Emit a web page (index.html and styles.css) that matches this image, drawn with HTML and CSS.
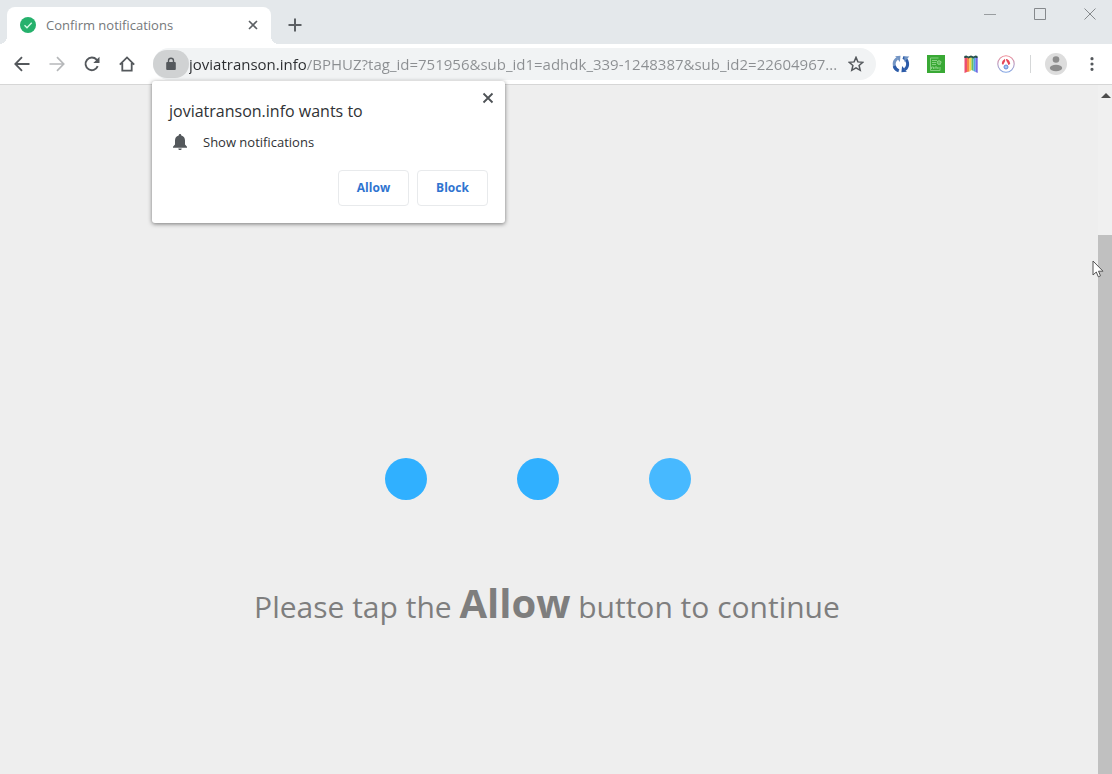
FILE: index.html
```html
<!DOCTYPE html>
<html lang="en">
<head>
<meta charset="utf-8">
<title>Confirm notifications</title>
<link rel="stylesheet" href="styles.css">
</head>
<body>
<div class="browser">
  <header class="tabstrip">
    <div class="tab">
      <svg class="icon16" viewBox="0 0 16 16"><circle cx="8" cy="8" r="8" fill="#25b16c"/><path d="M4.5 8.2l2.5 2.5 4.7-4.9" fill="none" stroke="#d9fbe8" stroke-width="1.3"/></svg>
      <span class="tab-title">Confirm notifications</span>
      <button class="plain" aria-label="Close tab"><svg class="icon10" viewBox="0 0 10 10"><path d="M1 1l8 8M9 1l-8 8" stroke="#5c6064" stroke-width="1.6"/></svg></button>
    </div>
    <button class="plain new-tab" aria-label="New tab"><svg class="icon14" viewBox="0 0 14 14"><path d="M7 .5v13M.5 7h13" stroke="#5c6064" stroke-width="2"/></svg></button>
    <div class="window-controls">
      <button class="plain" aria-label="Minimize"><svg class="icon12" viewBox="0 0 12 12"><path d="M0 6.5h12" stroke="#999da0"/></svg></button>
      <button class="plain" aria-label="Maximize"><svg class="icon12" viewBox="0 0 12 12"><path d="M.5.5h11v11H.5z" fill="none" stroke="#85898c"/></svg></button>
      <button class="plain" aria-label="Close"><svg class="icon12" viewBox="0 0 12 12"><path d="M.5.5l11 11M11.5.5l-11 11" stroke="#85898c"/></svg></button>
    </div>
  </header>

  <nav class="toolbar" aria-label="Browser toolbar">
    <div class="nav-buttons">
      <button class="plain" aria-label="Back"><svg class="icon16" viewBox="0 0 16 16"><path d="M15.500 8H1.500M8 1.200L1.300 8 8 14.800" fill="none" stroke="#54585c" stroke-width="1.8"/></svg></button>
      <button class="plain" aria-label="Forward"><svg class="icon16" viewBox="0 0 16 16"><path d="M.5 8h14M8 1.200L14.700 8 8 14.800" fill="none" stroke="#b6b8ba" stroke-width="1.700"/></svg></button>
      <button class="plain" aria-label="Reload"><svg class="icon16" viewBox="0 0 16 16"><path d="M13.700 10.200A6.300 6.300 0 1 1 12.600 3.700L14 5.200" fill="none" stroke="#54585c" stroke-width="1.900"/><path d="M15.500.8v6.200H9.300z" fill="#54585c"/></svg></button>
      <button class="plain" aria-label="Home"><svg class="icon16" viewBox="0 0 16 16"><path d="M.8 8.600L8 1.400l7.200 7.200M3.300 7v7.600h9.400V7" fill="none" stroke="#54585c" stroke-width="1.800"/></svg></button>
    </div>
    <div class="omnibox">
      <button class="plain site-info" aria-label="View site information"><svg class="icon14" viewBox="0 0 14 14"><rect x="2.200" y="5" width="9.600" height="8" rx="1" fill="#54585c"/><path d="M4.500 5.500V3.800a2.500 2.500 0 0 1 5 0v1.700" fill="none" stroke="#54585c" stroke-width="1.400"/></svg></button>
      <input class="url" type="text" aria-label="Address" value="joviatranson.info/BPHUZ?tag_id=751956&amp;sub_id1=adhdk_339-1248387&amp;sub_id2=22604967...">
      <button class="plain" aria-label="Bookmark this page"><svg class="icon16" viewBox="0 0 16 16"><path d="M8 1.400l1.900 4.500 4.900.4-3.700 3.200 1.100 4.800L8 11.800l-4.200 2.500 1.100-4.800L1.200 6.300l4.900-.4z" fill="none" stroke="#54585c" stroke-width="1.500"/></svg></button>
      <section class="prompt" role="dialog" aria-labelledby="prompt-title">
        <div class="prompt-head">
          <h2 class="prompt-title" id="prompt-title">joviatranson.info wants to</h2>
          <button class="plain prompt-close" aria-label="Dismiss"><svg class="icon12" viewBox="0 0 12 12"><path d="M1.500 1.500l9 9M10.500 1.500l-9 9" stroke="#4e5256" stroke-width="1.800"/></svg></button>
        </div>
        <p class="permission"><svg class="icon18" viewBox="0 0 18 18"><path d="M9 1c.9 0 1.300.6 1.300 1.500C12.800 3.100 14 5.200 14 7.500v4l2 2.200v1H2v-1l2-2.200v-4c0-2.300 1.200-4.400 3.700-5C7.700 1.600 8.100 1 9 1zM7.300 15.500h3.400c0 1-.7 1.600-1.700 1.600s-1.700-.6-1.700-1.600z" fill="#54585c"/></svg>Show notifications</p>
        <div class="prompt-actions">
          <button class="choice">Allow</button>
          <button class="choice">Block</button>
        </div>
      </section>
    </div>
    <div class="extensions">
      <button class="plain" aria-label="Sync extension"><svg class="icon18" viewBox="0 0 18 18"><path d="M7 15.800A7 7 0 0 1 5.200 3.400" fill="none" stroke="#7395c4" stroke-width="3"/><path d="M2.200 11A7 7 0 0 0 6.500 15.600" fill="none" stroke="#2c5ba8" stroke-width="3"/><path d="M3.200 1.200l5.300-.4-.6 6.200z" fill="#7395c4"/><path d="M11 2.300a7 7 0 0 1 1.800 12.200" fill="none" stroke="#2c5ba8" stroke-width="3"/><path d="M14.800 16.800l-5.400.4.700-6.200z" fill="#2c5ba8"/><path d="M12.300 7V1.200l5 .2z" fill="#6d91c2"/></svg></button>
      <button class="plain" aria-label="Green extension"><svg class="icon18" viewBox="0 0 18 18"><path d="M0 0h18v18H0z" fill="#39a935"/><path d="M11.500 3H3.500v12.500h9.500V12M5 5.500h5M5 7.500h4M5 9.500h4M4.500 14v-2h2v2m1.500 0v-2h2v2m1 0v-2M10 7h4.500M14 9h-3" fill="none" stroke="#8fd58b" stroke-width=".9"/><circle cx="12" cy="7.500" r="1.800" fill="none" stroke="#8fd58b"/></svg></button>
      <button class="plain" aria-label="Rainbow extension"><svg class="icon18" viewBox="0 0 18 18"><path d="M2.500 2H5v15l-2.500 1z" fill="#ed4f70"/><path d="M5 2h2.500v14.500L5 17z" fill="#f58745"/><path d="M7.500 2H9.500v13l-2 1.500z" fill="#f6d64b"/><path d="M9.500 2h2v14l-2-1z" fill="#67bd65"/><path d="M11.500 2h2v15l-2-1z" fill="#4ba8e1"/><path d="M13.500 2h2.200v16l-2.200-1z" fill="#7068e2"/><path d="M2.300 1l2-.5 2 1 2.700-1 2.500 1 2-1 2 .5v2H14l-1-.5-1.500 1L9 2.500l-2.500 1L5 2.500 4 3H2.300z" fill="#26514c"/></svg></button>
      <button class="plain" aria-label="Red and blue extension"><svg class="icon18" viewBox="0 0 18 18"><defs><linearGradient id="ring" x2="0" y2="1"><stop stop-color="#f08b96"/><stop offset="1" stop-color="#82a7e5"/></linearGradient></defs><circle cx="9" cy="9" r="8.200" fill="#fff" stroke="url(#ring)" stroke-width="1.100"/><path d="M4.800 8.500C5 6 6.500 5 8 3.800L8.200 6 6 10zM9 4c2.500 0 4 2.500 4.200 5l-2 1C11 7.500 9 6.500 9 4z" fill="#e74758"/><circle cx="9" cy="12" r="2" fill="#a8c6f3" stroke="#6787d5"/></svg></button>
      <span class="divider"></span>
      <button class="plain" aria-label="Profile"><svg class="icon22" viewBox="0 0 22 22"><circle cx="11" cy="11" r="11" fill="#dddddd"/><circle cx="11" cy="6.500" r="3.300" fill="#8d8d8d"/><ellipse cx="11" cy="15" rx="6.200" ry="3.200" fill="#8d8d8d"/></svg></button>
      <button class="plain" aria-label="Menu"><svg class="icon16" viewBox="0 0 16 16"><path d="M8 2.700v.01M8 8v.01M8 13.300v.01" stroke="#54585c" stroke-width="3.200" stroke-linecap="round"/></svg></button>
    </div>
  </nav>

  <div class="viewport">
    <main class="page">
      <div class="loader" aria-hidden="true"><span class="dot"></span><span class="dot"></span><span class="dot dot-fading"></span></div>
      <p class="message">Please tap the <strong class="message-strong">Allow</strong> button to continue</p>
    </main>
    <div class="scrollbar">
      <svg class="scroll-up" viewBox="0 0 10 5"><path d="M0 5l5-5 5 5z" fill="#4c4c4c"/></svg>
      <div class="thumb"></div>
      <svg class="cursor" viewBox="0 0 12 18"><path d="M1 1v14l3.300-3 2 4.800 2.200-1L6.500 11.200H11z" fill="#fff" stroke="#555"/></svg>
    </div>
  </div>
</div>
</body>
</html>
```
FILE: styles.css
```css
* { box-sizing: border-box; }

body {
  margin: 0;
  font-family: "Open Sans", "Noto Sans", sans-serif;
  color: #303235;
}

svg { display: block; flex: none; }

.icon10 { width: 10px; height: 10px; }
.icon12 { width: 12px; height: 12px; }
.icon14 { width: 14px; height: 14px; }
.icon16 { width: 16px; height: 16px; }
.icon18 { width: 18px; height: 18px; }
.icon22 { width: 22px; height: 22px; }

.plain {
  flex: none;
  padding: 0;
  border: 0;
  background: none;
}

.browser {
  display: flex;
  flex-direction: column;
  min-height: 100vh;
}

.tabstrip {
  display: flex;
  align-items: flex-end;
  height: 44px;
  padding-left: 7px;
  background: #e4e8eb;
}

.tab {
  position: relative;
  display: flex;
  align-items: center;
  gap: 10px;
  width: 264px;
  height: 37px;
  padding: 0 13px 1px;
  border-radius: 8px 8px 0 0;
  background: #fff;
}

.tab::before,
.tab::after {
  content: "";
  position: absolute;
  bottom: 0;
  width: 8px;
  height: 8px;
}

.tab::before {
  right: 100%;
  background: radial-gradient(circle at 0 0, #e4e8eb 8px, #fff 8px);
}

.tab::after {
  left: 100%;
  background: radial-gradient(circle at 100% 0, #e4e8eb 8px, #fff 8px);
}

.tab-title {
  flex: 1;
  font-size: 13px;
  line-height: 18px;
  color: #75787b;
}

.new-tab {
  margin-left: 17px;
  padding-bottom: 12px;
}

.window-controls {
  display: flex;
  gap: 38px;
  align-self: flex-start;
  margin-left: auto;
  padding: 8px 16px 0 0;
}

.toolbar {
  display: flex;
  align-items: center;
  height: 41px;
  padding: 0 12px 0 14px;
  border-bottom: 1px solid #d6d6d6;
  background: #fff;
}

.nav-buttons {
  display: flex;
  gap: 19px;
  margin-right: 18px;
}

.omnibox {
  position: relative;
  display: flex;
  flex: 1;
  align-items: center;
  height: 32px;
  min-width: 0;
  padding-right: 12px;
  border-radius: 16px;
  background: #f1f3f4;
}

.site-info {
  display: flex;
  align-items: center;
  justify-content: center;
  width: 36px;
  height: 28px;
  border-radius: 14px;
  background: #d0d2d3;
}

.url {
  flex: 1;
  min-width: 0;
  height: 28px;
  padding: 0;
  border: 0;
  font: 15px/20px "Open Sans", "Noto Sans", sans-serif;
  background: linear-gradient(to right, #2b2d30 118px, #8b8e91 118px);
  background-clip: text;
  -webkit-background-clip: text;
  -webkit-text-fill-color: transparent;
}

.prompt {
  position: absolute;
  z-index: 2;
  top: 33px;
  left: -1px;
  width: 353px;
  padding: 11px 17px 17px;
  border-radius: 3px;
  background: #fff;
  box-shadow: 0 1px 4px rgba(0, 0, 0, 0.5);
}

.prompt-head {
  display: flex;
  justify-content: space-between;
}

.prompt-title {
  margin: 8px 0 0;
  font-size: 16px;
  font-weight: 400;
  line-height: 22px;
}

.prompt-close {
  align-self: flex-start;
  margin-right: -6px;
}

.permission {
  display: flex;
  align-items: center;
  gap: 14px;
  margin: 10px 0 18px;
  padding-left: 2px;
  font-size: 13px;
  line-height: 20px;
}

.prompt-actions {
  display: flex;
  justify-content: flex-end;
  gap: 8px;
}

.choice {
  width: 71px;
  height: 36px;
  padding: 0;
  border: 1px solid #e8eaec;
  border-radius: 4px;
  background: #fff;
  color: #2f74d0;
  font: 700 12px/18px "Open Sans", "Noto Sans", sans-serif;
}

.extensions {
  display: flex;
  align-items: center;
  gap: 17px;
  margin-left: 16px;
}

.divider {
  width: 1px;
  height: 18px;
  margin: 0 -3px 0 -2px;
  background: #d5d7d8;
}

.viewport {
  display: flex;
  flex: 1;
  background: #eee;
}

.page {
  flex: 1;
  padding-top: 373px;
}

.loader {
  display: flex;
  justify-content: center;
  gap: 90px;
  padding-right: 23px;
}

.dot {
  width: 42px;
  height: 42px;
  border-radius: 50%;
  background: #30b0ff;
}

.dot-fading { background: #47b9ff; }

.message {
  margin: 72px 0 0;
  padding-right: 4px;
  text-align: center;
  font-size: 30px;
  line-height: 62px;
  color: #7e7e7e;
}

.message-strong { font-size: 40px; }

.scrollbar {
  position: relative;
  display: flex;
  flex-direction: column;
  align-items: flex-end;
  width: 14px;
  padding-top: 8px;
  background: #f0f0f0;
}

.scroll-up {
  width: 10px;
  height: 5px;
  margin-right: 1px;
}

.thumb {
  flex: 1;
  width: 14px;
  margin-top: 137px;
  background: #c0c0c0;
}

.cursor {
  position: absolute;
  top: 175px;
  left: -6px;
  width: 12px;
  height: 18px;
}
```
